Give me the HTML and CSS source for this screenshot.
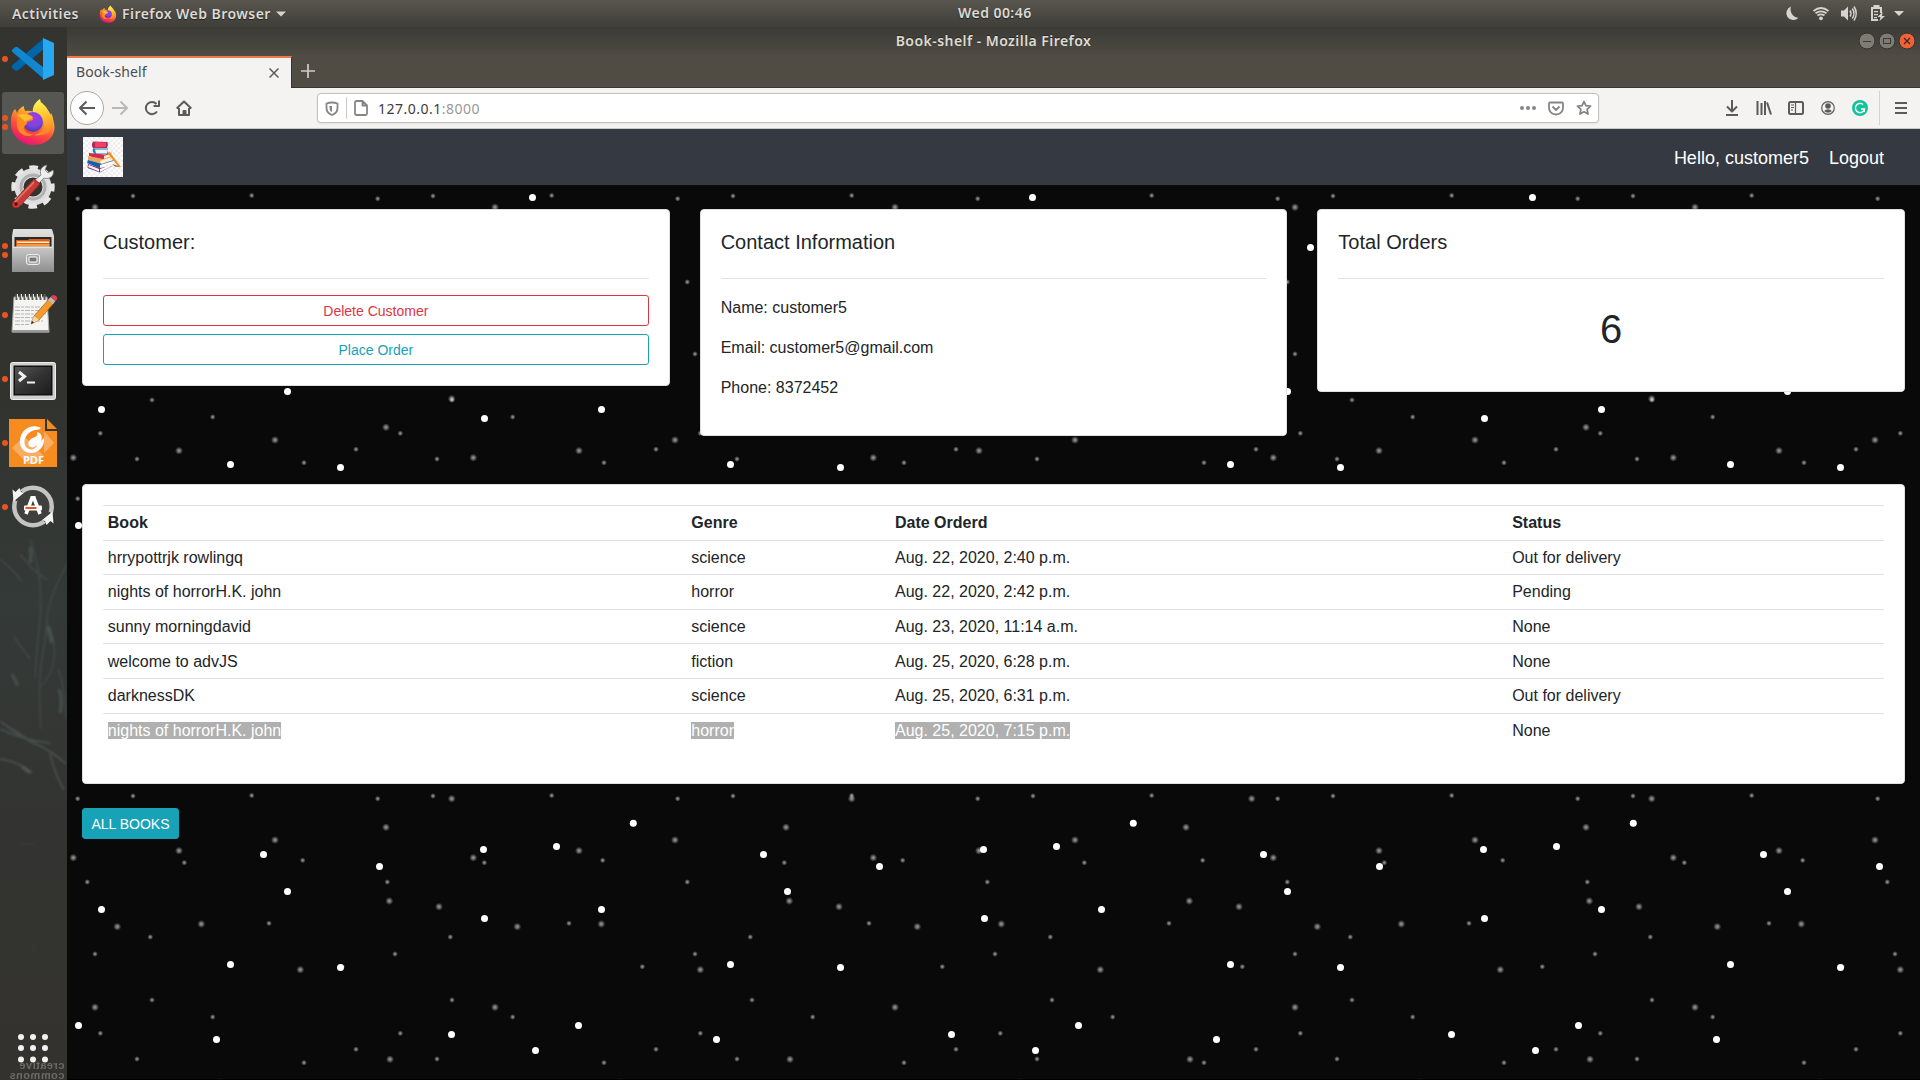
FILE: index.html
```
<!DOCTYPE html>
<html lang="en">
<head>
<meta charset="utf-8">
<title>Book-shelf</title>
<link rel="stylesheet" href="styles.css">
</head>
<body>
<svg class="defs" width="0" height="0" aria-hidden="true">
  <defs>
    <linearGradient id="ffFlame" x1="0.75" y1="0" x2="0.3" y2="1"><stop offset="0" stop-color="#fff44f"/><stop offset=".35" stop-color="#ffa42a"/><stop offset=".65" stop-color="#ff4b3a"/><stop offset="1" stop-color="#e4107c"/></linearGradient>
    <linearGradient id="ffTail" x1="0.4" y1="0" x2="0.6" y2="1"><stop offset="0" stop-color="#fff654"/><stop offset=".5" stop-color="#ffc02e"/><stop offset="1" stop-color="#ff7a2a"/></linearGradient>
    <radialGradient id="ffGlobe" cx=".55" cy=".3" r=".7"><stop offset="0" stop-color="#a838e8"/><stop offset=".6" stop-color="#7a45e0"/><stop offset="1" stop-color="#4a3aa8"/></radialGradient>
    <linearGradient id="metal" x1="0" y1="0" x2="0" y2="1"><stop offset="0" stop-color="#e2e2e2"/><stop offset="1" stop-color="#a8a8a8"/></linearGradient>
    <linearGradient id="steel" x1="0" y1="0" x2="0" y2="1"><stop offset="0" stop-color="#c9c9c9"/><stop offset="1" stop-color="#8f8f8f"/></linearGradient>
    <linearGradient id="screen" x1="0" y1="0" x2="1" y2="1"><stop offset="0" stop-color="#555"/><stop offset=".5" stop-color="#333"/><stop offset="1" stop-color="#1d1d1d"/></linearGradient>
    <symbol id="firefox" viewBox="0 0 46 48">
      <path d="M5 11c1 1 1.500 3 2 4 1-3 4-6 7-7 0 3 .5 4 1.500 5 4-1 8 0 12 3l3-12c6 4 8 9 11 14 3 6 4 12 2 17-3 8-11 12-20 12C12 47 2 39 1 27 .5 20 2 14 5 11z" fill="url(#ffFlame)"/>
      <path d="M30 1c-6 4-8 9-7 15 6 0 12 5 11 12-1 5-5 8-10 9 9 2 17-2 19-10 1-4 0-9-2-12l-1 4c-1-7-9-10-10-18z" fill="url(#ffTail)"/>
      <circle cx="23" cy="24" r="10" fill="url(#ffGlobe)"/>
      <path d="M7 17c5-2 9-2 15 1l1 4c-2 1-6 1-6 3s-3 2-3 5c0 4 5 7 10 6-7 5-16 0-17-8-.5-4 0-8 0-11z" fill="#ff8a1f"/>
      <path d="M7 17c5-2 9-2 16 2-1 3-6 2-8 5-2-3-5-5-8-7z" fill="#ffbd2e"/>
    </symbol>
  </defs>
</svg>

<div class="desktop">
  <header class="topbar">
    <span class="topbar-item activities">Activities</span>
    <span class="topbar-app"><svg width="18" height="18"><use href="#firefox"/></svg><span class="app-name">Firefox Web Browser</span><svg width="10" height="6"><path d="M0 .5h10L5 5.500z" fill="#d6d4cf"/></svg></span>
    <span class="clock">Wed 00:46</span>
    <svg class="tray" width="122" height="27" viewBox="0 0 122 27" fill="#d6d4cf">
      <path d="M10 6.500a7 7 0 1 0 7.500 11.300A8.500 8.500 0 0 1 10 6.500z" transform="translate(-1)"/>
      <g fill="none" stroke="#d6d4cf" stroke-width="1.800"><path d="M31.500 11q7.500-6 15 0M33.500 13.300q5.500-4 11 0M35.500 15.600q3.500-2.500 7 0"/></g>
      <circle cx="39" cy="18.300" r="1.900"/>
      <path d="M59 10.500h3l4-4v14l-4-4h-3z"/>
      <g fill="none" stroke="#d6d4cf" stroke-width="1.500"><path d="M68 10.500q2 3 0 6M70.300 8.500q3.400 5 0 10M72 6.500q4.500 7 0 14"/></g>
      <path d="M91.500 5h6v2h2.500v6h-2V9h-7v10h5v2h-7V7h2.500z"/>
      <path d="M92 11h4v1.300h-4zM92 14h4v1.300h-4zM92 17h3v1.300h-3z"/>
      <path d="M100.500 12l-5 5h3l-1 4 5.500-5h-3z"/>
      <path d="M113 11h10l-5 5z" transform="translate(-1)"/>
    </svg>
  </header>

  <div class="workspace">
    <aside class="dock">
      <div class="dock-item"><svg width="67" height="64" viewBox="0 0 67 64">
        <path d="M12 23l3-2.500c1-.6 2-.6 3 0L44 41v11l-30-26z" fill="#0065a9"/>
        <path d="M12 41l3 2.300c1 .6 2 .6 3 0L44 22V11L12.500 38c-1 1-1 2-.5 3z" fill="#0065a9"/>
        <path d="M12 23l3-2.500c1-.6 2-.6 3 0L44 41v11L12.500 25c-.8-.6-.8-1.400-.5-2z" fill="#1187cf"/>
        <path d="M43 11l11 5v32l-11 5V11z" fill="#29a8f2"/>
      </svg><i class="run one"></i></div>
      <div class="dock-item active"><svg width="67" height="64" viewBox="0 0 67 64"><use href="#firefox" x="10" y="7" width="46" height="48"/></svg><i class="run two"></i></div>
      <div class="dock-item"><svg width="67" height="64" viewBox="0 0 67 64">
        <circle cx="33" cy="32" r="14" fill="none" stroke="#dedede" stroke-width="9"/>
        <circle cx="33" cy="32" r="19.200" fill="none" stroke="#e6e6e6" stroke-width="5" stroke-dasharray="8.500 6.580" stroke-dashoffset="4.200"/>
        <circle cx="33" cy="32" r="12" fill="none" stroke="#b0b0b0" stroke-width="3"/>
        <path d="M41 20c-2-5 1-9 6-10l-2 5 3 3 5-3c2 5-3 10-9 8l-5 5-4-3z" fill="#eee" stroke="#777" stroke-width=".8"/>
        <path d="M34 24l6 5-21 23c-4 3-9-1-6-5z" fill="#c93b36" stroke="#8c2020" stroke-width=".8"/><path d="M34 27L15 47" stroke="#e57870" stroke-width="1.500"/><circle cx="16" cy="49" r="1.700" fill="#501010"/>
      </svg></div>
      <div class="dock-item"><svg width="67" height="64" viewBox="0 0 67 64">
        <path d="M14 10h37q1 0 1.300 1L54 17v36H12V17l1-6q0-1 1-1z" fill="url(#metal)"/>
        <rect x="14.500" y="18" width="37" height="11" fill="#2a2a2a"/>
        <path d="M16 29v-8h12l1-1h20l1 1v8z" fill="#d9601c"/><path d="M17 22.500h32v1.500H17z" fill="#fff0c0"/><path d="M17 25h32v4H17z" fill="#f0984c"/>
        <rect x="12" y="27.500" width="42" height="25.500" rx="1.500" fill="url(#steel)"/><path d="M13 28.500h40" stroke="#e2e2e2"/>
        <rect x="26.500" y="35.500" width="13" height="10" rx="2" fill="#aaa" stroke="#eee"/><rect x="29" y="38" width="8" height="5" rx="1" fill="#777" stroke="#fff"/>
      </svg><i class="run two"></i></div>
      <div class="dock-item"><svg width="67" height="64" viewBox="0 0 67 64">
        <path d="M14 14h33l2 35H12z" fill="#f4f4f0" stroke="#aaa"/><path d="M12 47h37v2.500H12z" fill="#9a9a98"/>
        <path d="M15 24h30M15 27.500h25M15 31h31M15 34.500h20M15 38h28M15 41.500h14" stroke="#b6b6b6" stroke-dasharray="5 1 3 1"/>
        <path d="M16.500 17v-6M20.500 17v-6M24.500 17v-6M28.500 17v-6M32.500 17v-6M36.500 17v-6M40.500 17v-6M44.500 17v-6" stroke="#5b5b58" stroke-width="2"/><path d="M17.500 15v-4M21.500 15v-4M25.500 15v-4M29.500 15v-4M33.500 15v-4M37.500 15v-4M41.500 15v-4" stroke="#e8e8e8"/>
        <path d="M31 41l3-8L49 16l5 4-15 17z" fill="#f49a2e" stroke="#a55c12" stroke-width=".7"/><path d="M31 41l3-8 5 4z" fill="#f4d9ae"/><path d="M31 41l1-3 2 1.500z" fill="#222"/>
        <path d="M48 17l2.500-3 5 4-2.500 3z" fill="#bcbcbc"/><path d="M50.500 14l1.500-1.500c3-1 6 1 5 4L55.500 18z" fill="#dd4450"/>
      </svg><i class="run one"></i></div>
      <div class="dock-item"><svg width="67" height="64" viewBox="0 0 67 64">
        <rect x="10.500" y="15.500" width="45" height="37" rx="2" fill="#cfcfcf" stroke="#eee"/><rect x="13.500" y="18.500" width="39" height="30" fill="#111"/><rect x="15" y="20" width="36" height="27" fill="url(#screen)"/>
        <path d="M19 25l5.500 4.500L19 34" fill="none" stroke="#f2f2f2" stroke-width="3"/><path d="M27 35.500h8" stroke="#f2f2f2" stroke-width="2"/>
      </svg><i class="run one"></i></div>
      <div class="dock-item"><svg width="67" height="64" viewBox="0 0 67 64">
        <path d="M9 8h36v12h12v36H9z" fill="#f68b1f"/><path d="M47 8l10 10H47z" fill="#f68b1f"/>
        <path d="M12 37l12-12 20 20-8 8H28zM44 20l10 12-10 10z" fill="#f9ad62"/>
        <path d="M41 17c-9-5-20 1-21 12-1 7 4 13 11 13 8 0 14-7 13-15l-3 3c2-5 0-8-4-9 1 3 0 4-2 5-6 2-8 6-6 9 2 2 6 2 8-1-1 5-8 6-11 2-4-6 0-15 9-17 3 0 5-1 6-2z" fill="#fff"/>
        <text x="33.500" y="52.500" class="pdf-label" text-anchor="middle">PDF</text>
      </svg><i class="run one"></i></div>
      <div class="dock-item"><svg width="67" height="64" viewBox="0 0 67 64">
        <circle cx="33" cy="31.500" r="16.500" fill="#3f3f3e"/><circle cx="33" cy="31.500" r="18.700" fill="none" stroke="#c4c4c4" stroke-width="4.500"/>
        <path d="M15 25l6-9M51 38l-6 9" stroke="#3a3b39" stroke-width="5"/>
        <path d="M12.500 14.500l3 2.500 4-4 1.500 4 3 .7-10.500 8.800z" fill="#f4f4f4"/><path d="M53.500 48.500l-3-2.500-4 4-1.500-4-3-.7 10.500-8.800z" fill="#f4f4f4"/>
        <path d="M32 23l-6 16M34 23l6 16" stroke="#fff" stroke-width="3.600"/><path d="M30.500 22.500h5" stroke="#fff" stroke-width="3"/><rect x="24" y="30.500" width="18" height="5" rx="1" fill="#fff"/><rect x="25.500" y="32" width="11" height="2" fill="#e95420"/>
      </svg><i class="run one"></i></div>
      <div class="dock-space">
        <svg class="scratches" width="67" height="490" viewBox="0 0 67 490" preserveAspectRatio="none">
          <g fill="none" stroke="#8fb0ae">
            <path d="M0 20q12 10 22 22M20 15q15 20 28 26M67 25Q48 60 47 80t-5 40-1 70M30 0q14 40 10 80t-5 60M48 85q8 18 6 35t-14 28M14 98l16 22M58 130q8 20 8 50" stroke-width="1.500" opacity=".15"/>
            <path d="M0 182q20 16 36 23t30 20M0 190q25 12 50 14M8 188q15 8 24 16M0 220q18 2 32 14M50 215q5 20 14 36" stroke-width="2" opacity=".2"/>
            <path d="M30 8q2 9 0 16M48 88l4 16M59 150q4 12 1 24M12 135l6 12M22 228l8 6" stroke-width="3.500" opacity=".18"/>
            <path d="M20 305h14M32 405l3 8" opacity=".12"/>
          </g>
        </svg>
      </div>
      <div class="show-apps">
        <div class="wallpaper-mark"><div>creative</div><div>commons</div></div>
        <svg width="67" height="60" viewBox="0 0 67 60" fill="#f2f2f2"><circle cx="21" cy="21" r="3"/><circle cx="33" cy="21" r="3"/><circle cx="45" cy="21" r="3"/><circle cx="21" cy="32" r="3"/><circle cx="33" cy="32" r="3"/><circle cx="45" cy="32" r="3"/><circle cx="21" cy="43.500" r="3"/><circle cx="33" cy="43.500" r="3"/><circle cx="45" cy="43.500" r="3"/></svg>
      </div>
    </aside>

    <section class="window">
      <div class="titlebar">
        <span class="title">Book-shelf - Mozilla Firefox</span>
        <svg class="controls" width="58" height="18" viewBox="0 0 58 18">
          <circle cx="9" cy="9" r="8" fill="#7c7b74" stroke="#33322e"/><path d="M5 9.500h8" stroke="#3a3935"/>
          <circle cx="29" cy="9" r="8" fill="#7c7b74" stroke="#33322e"/><rect x="25.500" y="6.500" width="7" height="5" fill="none" stroke="#3a3935"/>
          <circle cx="49" cy="9" r="8" fill="#ee6237" stroke="#33322e"/><path d="M46 6l6 6M52 6l-6 6" stroke="#42241a" stroke-width="1.200"/>
        </svg>
      </div>
      <div class="tabs">
        <div class="tab"><span>Book-shelf</span><svg width="10" height="10" viewBox="0 0 10 10"><path d="M.5.5l9 9M9.500.5l-9 9" stroke="#5c5c5a" stroke-width="1.500"/></svg></div>
        <svg class="new-tab" width="14" height="14"><path d="M7 0v14M0 7h14" stroke="#cfcdc8" stroke-width="1.700"/></svg>
      </div>
      <div class="toolbar">
        <span class="tool back"><svg width="18" height="16" viewBox="0 0 18 16" class="ico"><path d="M17 8H2M8.500 1.500L2 8l6.500 6.500"/></svg></span>
        <span class="tool faded"><svg width="18" height="16" viewBox="0 0 18 16" class="ico"><path d="M1 8h15M9.500 1.500L16 8l-6.500 6.500"/></svg></span>
        <span class="tool"><svg width="16" height="16" viewBox="0 0 16 16" class="ico"><path d="M13 11.500A6.100 6.100 0 1 1 12.500 4M15 .5V6H9.500"/></svg></span>
        <span class="tool"><svg width="16" height="16" viewBox="0 0 16 16" class="ico"><path d="M.7 8.500L8 1.500l7.300 7M3 8v7h10V8M7.500 15v-4h2v4"/></svg></span>
        <div class="urlbar">
          <svg width="14" height="15" viewBox="0 0 14 15" class="ico light"><path d="M1.500 2.500Q7 .5 12.500 2.500V7q0 5-5.500 7Q1.500 12 1.500 7z"/><path d="M7 5v6Q4.500 10 4.500 7V5z" fill="#858585" stroke="none"/></svg>
          <span class="url-sep"></span>
          <svg width="14" height="16" viewBox="0 0 14 16" class="ico light"><path d="M2.500 1h6L13 5.500v8q0 1.500-1.500 1.500h-9Q1 15 1 13.500v-11Q1 1 2.500 1zM8.500 1v4.500H13"/></svg>
          <span class="url">127.0.0.1<em>:8000</em></span>
          <svg width="16" height="4" fill="#858585"><circle cx="2" cy="2" r="2"/><circle cx="8" cy="2" r="2"/><circle cx="14" cy="2" r="2"/></svg>
          <svg width="16" height="15" viewBox="0 0 16 15" class="ico light"><path d="M2 1.500h12q1 0 1 1V7a7 6.500 0 0 1-14 0V2.500q0-1 1-1zM4.500 5.500L8 9l3.500-3.500"/></svg>
          <svg width="16" height="16" viewBox="0 0 16 16" class="ico light"><path d="M8 1.500l1.900 4.200 4.600.5-3.400 3.100.9 4.700L8 11.700 4 14l.9-4.700L1.500 6.200l4.600-.5z"/></svg>
        </div>
        <span class="tool"><svg width="14" height="16" viewBox="0 0 14 16" class="ico"><path d="M7 0v11M2 6.500l5 5 5-5M1 15h12"/></svg></span>
        <span class="tool"><svg width="16" height="14" viewBox="0 0 16 14" class="ico"><path d="M1.500 0v14M5.500 2v12M9 0v14M11 1.500L15 13.500"/></svg></span>
        <span class="tool"><svg width="16" height="14" viewBox="0 0 16 14" class="ico"><rect x="1" y="1" width="14" height="12" rx="1.500"/><path d="M7.500 1v12M3 4h3M3 6.500h3M3 9h2" stroke-width="1.200"/></svg></span>
        <span class="tool"><svg width="14" height="14" viewBox="0 0 14 14"><circle cx="7" cy="7" r="6.300" fill="none" stroke="#5b5b5b" stroke-width="1.200"/><circle cx="7" cy="5" r="2.800" fill="#5b5b5b"/><path d="M3 10q4-3.500 8 0-4 3.500-8 0z" fill="#5b5b5b"/></svg></span>
        <span class="tool"><svg width="16" height="16" viewBox="0 0 16 16"><circle cx="8" cy="8" r="8" fill="#15c39a"/><path d="M11 4.500A4.600 4.600 0 1 0 12.500 9H9M12.300 8.500V12" fill="none" stroke="#fff" stroke-width="1.400"/></svg></span>
        <span class="tool-sep"></span>
        <span class="tool menu"><svg width="12" height="12" class="ico"><path d="M0 1h12M0 6h12M0 11h12"/></svg></span>
      </div>

      <div class="page">
        <svg class="stars" width="1853" height="894" aria-hidden="true">
          <defs>
            <radialGradient id="dimStar"><stop offset="0" stop-color="#fff" stop-opacity=".62"/><stop offset=".35" stop-color="#fff" stop-opacity=".42"/><stop offset="1" stop-color="#fff" stop-opacity="0"/></radialGradient>
            <g id="s"><circle r="2.900" fill="url(#dimStar)"/></g>
            <g id="m"><circle r="4" fill="url(#dimStar)"/></g>
            <g id="l"><circle r="3.500" fill="#fff"/></g>
            <pattern id="small" width="300" height="300" y="595" patternUnits="userSpaceOnUse">
              <use href="#s" x="10.700" y="18.700"/><use href="#s" x="66" y="16"/><use href="#s" x="184.700" y="15.500"/><use href="#s" x="117.300" y="82.700"/><use href="#s" x="235.700" y="80.300"/><use href="#s" x="20.300" y="102"/><use href="#s" x="202" y="143.300"/><use href="#s" x="83.300" y="157"/><use href="#s" x="28" y="174"/><use href="#s" x="275.300" y="186.700"/><use href="#s" x="85" y="220"/><use href="#s" x="145.700" y="237"/><use href="#s" x="33.300" y="253.300"/><use href="#s" x="289" y="269.300"/><use href="#s" x="70" y="279"/><use href="#s" x="237" y="282.700"/>
            </pattern>
            <pattern id="medium" width="400" height="400" y="595" patternUnits="userSpaceOnUse">
              <use href="#m" x="384.700" y="18.700"/><use href="#m" x="319" y="47.300"/><use href="#m" x="208" y="60"/><use href="#m" x="112" y="70.700"/><use href="#m" x="6.300" y="77.700"/><use href="#m" x="322.300" y="121"/><use href="#m" x="372" y="126.700"/><use href="#m" x="50.300" y="146.700"/><use href="#m" x="134.300" y="144"/><use href="#m" x="233.300" y="189.700"/><use href="#m" x="28" y="227.300"/><use href="#m" x="323" y="279.300"/><use href="#m" x="152.700" y="302"/>
            </pattern>
            <pattern id="large" width="500" height="500" y="595" patternUnits="userSpaceOnUse">
              <use href="#l" x="66.300" y="43.300"/><use href="#l" x="196.500" y="74.500"/><use href="#l" x="416.500" y="69.500"/><use href="#l" x="489.500" y="66.500"/><use href="#l" x="312.500" y="86.500"/><use href="#l" x="220.500" y="111.500"/><use href="#l" x="34.500" y="129.500"/><use href="#l" x="417.500" y="138.500"/><use href="#l" x="163.500" y="184.500"/><use href="#l" x="273.500" y="187.500"/><use href="#l" x="11.500" y="245.500"/><use href="#l" x="149.500" y="259.500"/><use href="#l" x="384.500" y="254.500"/><use href="#l" x="468.500" y="270.500"/><use href="#l" x="465.500" y="417.500"/><use href="#l" x="243.500" y="467.500"/>
            </pattern>
          </defs>
          <rect width="1853" height="894" fill="url(#small)"/><rect width="1853" height="894" fill="url(#medium)"/><rect width="1853" height="894" fill="url(#large)"/>
        </svg>
        <nav class="site-nav">
          <svg class="brand" width="40" height="40" viewBox="0 0 40 40">
            <defs><pattern id="check" width="5" height="5" patternUnits="userSpaceOnUse"><path d="M0 0h2.500v2.500H0zM2.500 2.500H5V5H2.500z" fill="#ececec"/></pattern></defs>
            <rect width="40" height="40" fill="#fff"/><rect width="40" height="40" fill="url(#check)"/>
            <path d="M10 4.500l14.500.5q1 3-.5 6l-14 .3q-2-3 0-6.800z" fill="#b52058"/><path d="M12 5l11 .5v4.500l-11 .5z" fill="#ee4166"/>
            <path d="M10 11.500h15v5.500H12q-3-2-2-5.500z" fill="#1686b4"/><path d="M12 12.500h13l-1 4H13z" fill="#f2f5f5"/>
            <path d="M6 16l16 1.500 7-2-4 6.500-6 1-13-4z" fill="#d62950"/><path d="M21 19l8-3-2 4-6 2z" fill="#f9e8df"/>
            <path d="M5 19l15 3 9-3-3 7-8 1-13-4z" fill="#e8aa62"/><path d="M17 24l11-4-1 4-9 3z" fill="#fff2db"/>
            <path d="M5 23l14 4 12-4-3 4-12 4-12-5z" fill="#1560a8"/><path d="M17 28l13-4-1 3-12 4z" fill="#fff"/>
            <path d="M5 27l12 4 12-2-12 6.500L4.500 31z" fill="#782c80"/><path d="M6 28l10 4v2.500L5 30z" fill="#f9f3f8"/><path d="M17 32l11-4-1 2-10 5z" fill="#fff"/>
            <path d="M26 14l3 4 9 12-3-1-10-12z" fill="#f09121"/><path d="M29 27l9 3-6-.5z" fill="#8c5524"/>
          </svg>
          <div class="nav-links"><span>Hello, customer5</span><a>Logout</a></div>
        </nav>
        <main class="content">
          <div class="row">
            <div class="card">
              <h5>Customer:</h5><hr>
              <a class="btn outline danger">Delete Customer</a>
              <a class="btn outline info">Place Order</a>
            </div>
            <div class="card">
              <h5>Contact Information</h5><hr>
              <div class="contact"><p>Name: customer5</p><p>Email: customer5@gmail.com</p><p>Phone: 8372452</p></div>
            </div>
            <div class="card">
              <h5>Total Orders</h5><hr>
              <h1>6</h1>
            </div>
          </div>
          <div class="card orders">
            <table>
              <colgroup><col class="c-book"><col class="c-genre"><col class="c-date"><col></colgroup>
              <tr><th>Book</th><th>Genre</th><th>Date Orderd</th><th>Status</th></tr>
              <tr><td>hrrypottrjk rowlingq</td><td>science</td><td>Aug. 22, 2020, 2:40 p.m.</td><td>Out for delivery</td></tr>
              <tr><td>nights of horrorH.K. john</td><td>horror</td><td>Aug. 22, 2020, 2:42 p.m.</td><td>Pending</td></tr>
              <tr><td>sunny morningdavid</td><td>science</td><td>Aug. 23, 2020, 11:14 a.m.</td><td>None</td></tr>
              <tr><td>welcome to advJS</td><td>fiction</td><td>Aug. 25, 2020, 6:28 p.m.</td><td>None</td></tr>
              <tr><td>darknessDK</td><td>science</td><td>Aug. 25, 2020, 6:31 p.m.</td><td>Out for delivery</td></tr>
              <tr><td><mark>nights of horrorH.K. john</mark></td><td><mark>horror</mark></td><td><mark>Aug. 25, 2020, 7:15 p.m.</mark></td><td>None</td></tr>
            </table>
          </div>
          <a class="btn solid">ALL BOOKS</a>
        </main>
      </div>
    </section>
  </div>
</div>
</body>
</html>
```
FILE: styles.css
```
* { box-sizing: border-box; }
body { margin: 0; background: #000; overflow: hidden; font-family: "Liberation Sans", Arial, sans-serif; }
svg { display: block; flex: none; }
.defs { position: absolute; }
.desktop { width: 1920px; height: 1080px; display: flex; flex-direction: column; }

/* system bar */
.topbar { position: relative; flex: none; height: 27px; display: flex; align-items: center; padding: 0 12px; background: linear-gradient(#59564e, #3f3e39); color: #dcdad5; font: 600 14px/26px "Noto Sans", "Open Sans", sans-serif; letter-spacing: .45px; text-shadow: 0 1px 1px #222; white-space: nowrap; }
.activities { width: 87px; }
.topbar-app { display: flex; align-items: center; gap: 5px; }
.app-name { width: 149px; }
.clock { position: absolute; left: 958px; top: 0; }
.tray { margin-left: auto; margin-right: 4px; }

.workspace { flex: 1; display: flex; min-height: 0; }
.dock { width: 67px; flex: none; display: flex; flex-direction: column; background: linear-gradient(#33332f 0, #32332f 35%, #343a38 55%, #333431 75%, #33322e); }
.dock-item { position: relative; height: 64px; flex: none; display: flex; }
.dock-item.active::before { content: ""; position: absolute; left: 2px; top: 1px; width: 62px; height: 62px; border-radius: 3px; background: #565653; }
.dock-item svg { position: relative; }
.run { position: absolute; left: 2px; width: 6px; height: 6px; border-radius: 50%; background: #e95420; }
.run.one { top: 29px; }
.run.two { top: 24px; box-shadow: 0 9px #e95420; }
.dock-space { flex: 1; min-height: 0; overflow: hidden; }
.scratches { filter: blur(.8px); }
.show-apps { position: relative; height: 64px; flex: none; }
.show-apps svg { position: relative; }
.pdf-label { font: bold 11px "Open Sans", sans-serif; fill: #fff; }
.wallpaper-mark { position: absolute; left: 9px; bottom: 0; transform: scaleX(-1); color: #6a6a66; font: bold 11px/10px "Liberation Sans", sans-serif; letter-spacing: .5px; }
.wallpaper-mark div { height: 10px; }

/* browser chrome */
.window { flex: 1; min-width: 0; display: flex; flex-direction: column; border-bottom: 1px solid #000; }
.titlebar { position: relative; height: 28px; flex: none; background: linear-gradient(#3b3a36, #4e4b43); display: flex; justify-content: flex-end; padding: 5px 4px 0 0; }
.title { position: absolute; left: 0; right: 0; top: 0; text-align: center; color: #dfdbd2; font: 600 14px/28px "Noto Sans", "Open Sans", sans-serif; letter-spacing: .45px; text-shadow: 0 -1px #2c2b28; }
.tabs { height: 33px; flex: none; display: flex; background: #504c44; border-bottom: 1px solid #35342f; }
.tab { height: 32px; width: 225px; margin-top: 1px; display: flex; align-items: center; justify-content: space-between; padding: 0 12px 0 9px; background: #f4f3f2; border-top: 2px solid #f07746; border-right: 1px solid #35342f; color: #4c4c4c; font: 14px/20px "Noto Sans", "Open Sans", sans-serif; letter-spacing: .1px; }
.tab span { padding-bottom: 2px; }
.new-tab { margin: 9px 0 0 9px; }
.toolbar { height: 41px; flex: none; display: flex; align-items: center; padding: 0 3px; background: #f4f3f2; border-bottom: 1px solid #cac8c5; }
.tool { width: 32px; height: 32px; flex: none; display: flex; align-items: center; justify-content: center; }
.ico { fill: none; stroke: #5b5b5b; stroke-width: 2; stroke-linejoin: round; }
.ico.light { stroke: #858585; stroke-width: 1.800; }
.tool.back { width: 34px; height: 34px; border: 1px solid #a9a9a9; border-radius: 50%; background: #fdfdfd; }
.tool.faded { opacity: .38; }
.urlbar { width: 1282px; height: 30px; margin: 0 117px; display: flex; align-items: center; gap: 12px; padding: 0 6px 0 7px; border: 1px solid #c2c0bd; border-radius: 4px; background: #fff; box-shadow: 0 1px 2px rgba(0,0,0,.08); }
.url-sep { width: 1px; height: 22px; margin: 0 -5px 0 -5px; background: #c9c9c9; }
.url { flex: 1; margin-left: -2px; color: #3c3c3c; font: 14px/20px "Noto Sans", "Open Sans", sans-serif; letter-spacing: .5px; padding-top: 1px; }
.url em { font-style: normal; color: #999; }
.tool-sep { width: 1px; height: 34px; margin: 0 5px 0 3px; background: #d4d2cf; }

/* web page */
.page { position: relative; flex: 1; min-height: 0; background: #090909; color: #212529; font-size: 16px; line-height: 24px; }
.stars { position: absolute; left: 0; top: 56px; }
.site-nav { height: 56px; display: flex; align-items: center; justify-content: space-between; padding: 0 36px 0 16px; background: #353a42; }
.nav-links { display: flex; gap: 20px; color: #fff; font-size: 18px; line-height: 27px; padding-top: 3px; }
.content { position: relative; padding: 24px 15px; }
.row { display: flex; align-items: flex-start; gap: 30px; height: 275px; }
.card { flex: 1; padding: 20px; background: #fff; border: 1px solid #dfdfdf; border-radius: 4px; }
.card h5 { margin: 0; font-size: 20px; line-height: 24px; font-weight: normal; }
.card h1 { margin: 0; padding: 10px 0 18px; font-size: 40px; font-weight: normal; line-height: 48px; text-align: center; }
hr { margin: 24px 0 16px; border: 0; border-top: 1px solid #e3e3e3; }
.contact { height: 120px; padding-top: 1px; }
.card p { margin: 0 0 16px; }
.btn { display: block; height: 31px; border: 1px solid; border-radius: 3px; padding: 5px 7px 3px; font-size: 14px; line-height: 21px; text-align: center; }
.danger { color: #dc3545; margin-bottom: 8px; }
.info { color: #17a2b8; }
.solid { width: 97px; margin-top: 24px; background: #17a2b8; border-color: #17a2b8; color: #fff; white-space: nowrap; }
.orders { height: 300px; }
table { width: 100%; table-layout: fixed; border-collapse: collapse; }
th, td { height: 34.600px; padding: 5.300px 4.800px 4.300px; border-top: 1px solid #dee2e6; text-align: left; vertical-align: top; }
.c-book { width: 583.500px; }
.c-genre { width: 203.700px; }
.c-date { width: 617.200px; }
mark { background: #b0b0b0; color: #fff; }
```
